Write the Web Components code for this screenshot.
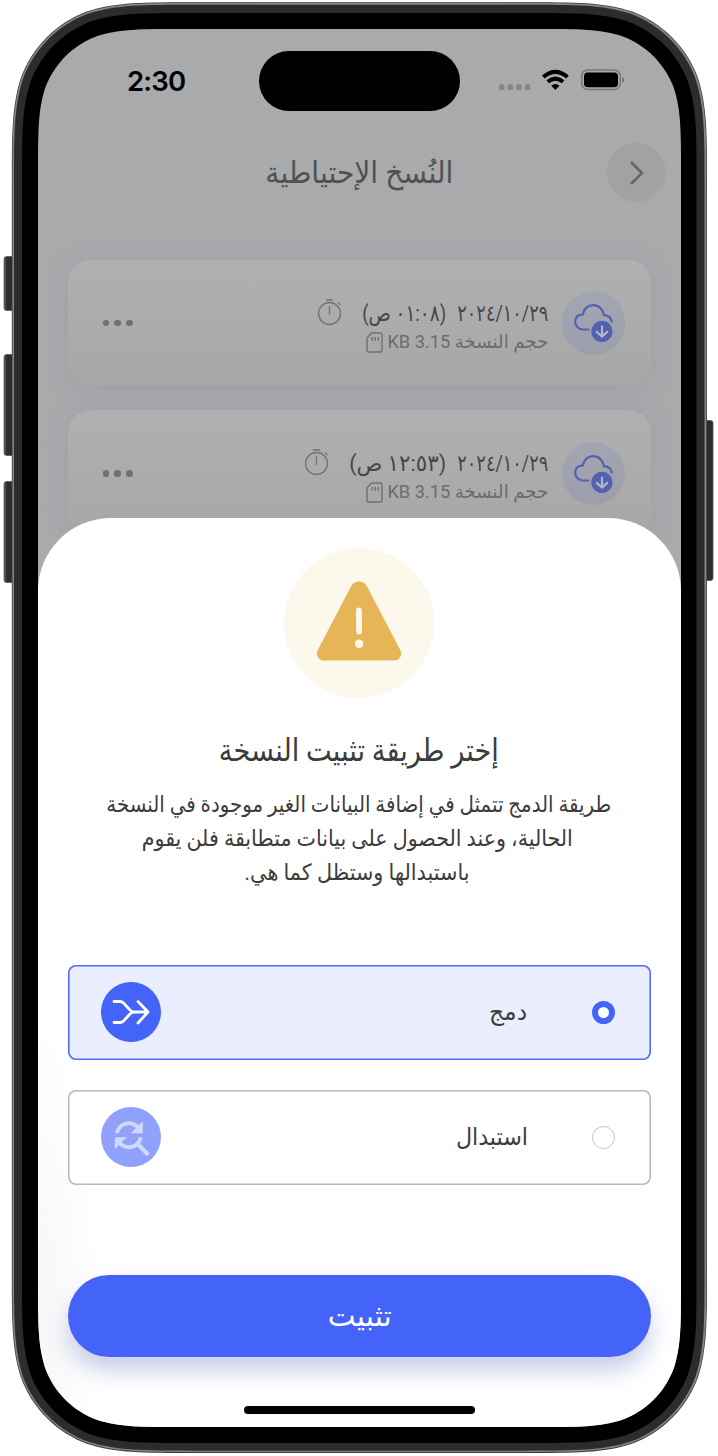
<!DOCTYPE html>
<html lang="ar">
<head>
<meta charset="utf-8">
<title>النُسخ الإحتياطية</title>
<style>
html,body{margin:0;background:#fff}
body{width:718px;height:1456px;overflow:hidden;font-family:Roboto,"DejaVu Sans",sans-serif}
</style>
</head>
<body>
<phone-frame>
  <status-bar></status-bar>
  <page-header></page-header>
  <backup-list>
    <backup-card date="٢٠٢٤/١٠/٢٩" time="(٠١:٠٨ ص)" time-width="84"></backup-card>
    <backup-card date="٢٠٢٤/١٠/٢٩" time="(١٢:٥٣ ص)" time-width="97"></backup-card>
  </backup-list>
  <install-sheet slot="sheet">
    <install-option label="دمج" label-width="38" kind="merge" selected></install-option>
    <install-option label="استبدال" label-width="72" kind="replace"></install-option>
  </install-sheet>
</phone-frame>
<script>
// Rounded rectangle with continuous-curvature corners
function squircle(x, y, w, h, r) {
  const A = 1.528665 * r, B = 1.088493 * r, C = .868407 * r, D = .631494 * r, E = .074911 * r, F = .372824 * r, G = .16906 * r;
  const X = x + w, Y = y + h;
  return `M${x + A} ${y}H${X - A}C${X - B} ${y} ${X - C} ${y} ${X - D} ${y + E}C${X - F} ${y + G} ${X - G} ${y + F} ${X - E} ${y + D}C${X} ${y + C} ${X} ${y + B} ${X} ${y + A}` +
    `V${Y - A}C${X} ${Y - B} ${X} ${Y - C} ${X - E} ${Y - D}C${X - G} ${Y - F} ${X - F} ${Y - G} ${X - D} ${Y - E}C${X - C} ${Y} ${X - B} ${Y} ${X - A} ${Y}` +
    `H${x + A}C${x + B} ${Y} ${x + C} ${Y} ${x + D} ${Y - E}C${x + F} ${Y - G} ${x + G} ${Y - F} ${x + E} ${Y - D}C${x} ${Y - C} ${x} ${Y - B} ${x} ${Y - A}` +
    `V${y + A}C${x} ${y + B} ${x} ${y + C} ${x + E} ${y + D}C${x + G} ${y + F} ${x + F} ${y + G} ${x + D} ${y + E}C${x + C} ${y} ${x + B} ${y} ${x + A} ${y}Z`;
}
class Base extends HTMLElement {
  connectedCallback() {
    if (this.shadowRoot) return;
    this.attachShadow({ mode: 'open' }).innerHTML = this.view();
    this.ready && this.ready();
  }
}

// One line of text condensed or widened to a set width
customElements.define('fit-text', class extends Base {
  view() {
    return `<style>:host{display:block;flex:none;direction:rtl;white-space:nowrap;line-height:1}
      span{display:inline-block;transform-origin:100% 50%;line-height:inherit}</style><span>${this.getAttribute('text')}</span>`;
  }
  ready() {
    const w = +this.getAttribute('w'), s = this.shadowRoot.querySelector('span');
    this.style.width = w + 'px';
    const n = s.getBoundingClientRect().width;
    if (n) s.style.transform = `scaleX(${w / n})`;
  }
});

customElements.define('phone-frame', class extends Base {
  view() {
    return `<style>
      :host{display:block;box-sizing:border-box;position:relative;width:718px;height:1456px;padding:29px 37px 29px 38px}
      .frame{position:absolute;inset:0}
      .screen{position:relative;display:flex;flex-direction:column;width:643px;height:1398px;background:#a9aaac;clip-path:path("${squircle(0, 0, 643, 1398, 94)}")}
    </style>
    <svg class="frame" width="718" height="1456">
      <defs><linearGradient id="k" x1="0" x2="1"><stop offset="0" stop-color="#666"/><stop offset=".25" stop-color="#2c2c2c"/><stop offset="1" stop-color="#2c2c2c"/></linearGradient></defs>
      <g fill="url(#k)" stroke="#454545" stroke-width=".6">
        <rect x="4" y="256.500" width="12" height="54" rx="2.500"/><rect x="4" y="354.500" width="12" height="101" rx="2.500"/>
        <rect x="4" y="481.500" width="12" height="101" rx="2.500"/></g>
      <rect x="701" y="420.500" width="12" height="160" rx="2.500" fill="#2c2c2c" stroke="#555" stroke-width=".8"/>
      <path d="${squircle(11.8, 2.3, 695.2, 1450.7, 120)}" fill="#3a3a3a"/>
      <path d="${squircle(12.5, 3, 693.8, 1449, 119)}" fill="#858585"/>
      <path d="${squircle(14, 4.7, 690.5, 1446, 118)}" fill="#2c2c2c"/>
      <path d="${squircle(22, 13, 674.5, 1430, 110)}" fill="#000"/>
    </svg>
    <div class="screen"><slot></slot><slot name="sheet"></slot></div>`;
  }
});

customElements.define('status-bar', class extends Base {
  view() {
    return `<style>
      :host{display:grid;grid-template-columns:221px 201px 221px;height:105px;flex:none;align-items:start}
      .time{font:600 27.500px/32px Inter,sans-serif;letter-spacing:-.8px;color:#000;padding:36px 0 0 89px}
      .island{height:60px;margin-top:22px;border-radius:30px;background:#000}
      svg{margin:36px 0 0 36px}
    </style>
    <div class="time">2:30</div><div class="island"></div>
    <svg width="132" height="30" viewBox="496 65 132 30">
      <g fill="#858587"><rect x="499" y="84.300" width="5.500" height="5.600" rx="1.500"/><rect x="507.600" y="84.300" width="5.500" height="5.600" rx="1.500"/><rect x="516.200" y="84.300" width="5.500" height="5.600" rx="1.500"/><rect x="524.800" y="84.300" width="5.500" height="5.600" rx="1.500"/></g>
      <g fill="none" stroke="#000" stroke-width="4"><path d="M543.300 77Q555.400 66.700 567.500 77"/><path d="M547.700 81.800Q555.400 75.500 563.100 81.800"/></g>
      <path d="M551.300 85.700Q555.400 82.100 559.500 85.700L555.400 90Z"/>
      <rect x="581.700" y="70" width="38.600" height="19.500" rx="6" fill="none" stroke="#777779" stroke-width="1.500"/>
      <rect x="584" y="72.500" width="34" height="14.700" rx="3.800"/><path d="M622 77.200q2.400.5 2.400 2.700t-2.400 2.700Z" fill="#777779"/>
    </svg>`;
  }
});

customElements.define('page-header', class extends Base {
  view() {
    return `<style>
      :host{display:grid;grid-template-columns:227px 188px 1fr;height:126px;flex:none;align-items:start}
      fit-text{grid-column:2;color:#505153;font-size:30px;line-height:40px;margin-top:19px}
      .back{justify-self:end;width:59px;height:59px;margin:9px 15.500px 0 0;border-radius:50%;background:#a2a2a4}
    </style>
    <fit-text text="النُسخ الإحتياطية" w="188"></fit-text>
    <svg class="back" viewBox="0 0 59 59" fill="none" stroke="#656567" stroke-width="2.500"><path d="M24 19L35 30L24 41"/></svg>`;
  }
});

customElements.define('backup-list', class extends Base {
  view() {
    return `<style>:host{display:flex;flex-direction:column;gap:24.400px;padding:0 30px}</style><slot></slot>`;
  }
});

customElements.define('backup-card', class extends Base {
  view() {
    return `<style>
      :host{display:flex;direction:rtl;align-items:center;box-sizing:border-box;height:126px;padding:0 26px 0 34.500px;border-radius:23px;background:linear-gradient(#b0b0b0,#a7a7a7);box-shadow:0 3px 24px rgba(135,142,158,.36);flex:none}
      .cloud{flex:none;width:63.500px;height:63.500px;border-radius:50%;background:linear-gradient(#a3a5b0,#9c9eac)}
      .info{margin:7px 13.500px 0 0;flex:1}
      .row{display:flex;align-items:center;height:32px}
      .date{color:#464646;font-size:22.500px;line-height:30px}
      .time{color:#464646;font-size:22.500px;line-height:30px;margin-right:11px}
      .watch{margin:0 20px 3px 0}
      .size{height:27px;gap:4px}
      .size fit-text{font-size:18.500px;line-height:25px;color:#6c6c6c}
      .more{display:flex;gap:5.600px}
      .more i{width:6.400px;height:6.400px;border-radius:50%;background:#707070}
    </style>
    <svg class="cloud" viewBox="0 0 64 64" fill="none" stroke="#5361b0" stroke-width="2.200" stroke-linecap="round">
      <path d="M26.700 38.800H20.700A7.900 7.900 0 0 1 13.200 31C13.200 26.500 16.500 23.500 20.900 23.700C22.300 17.800 26 14.200 31.600 14.200S41.200 18.600 42.200 24.300C46.500 24.500 49.500 26.900 50.200 30.900"/>
      <circle cx="40.300" cy="40.700" r="10.700" fill="#5361b0" stroke="none"/>
      <path d="M40.300 35.800V45.400M35 41.200L40.300 46L45.600 41.200" stroke="#b3b6c7"/></svg>
    <div class="info">
      <div class="row"><fit-text class="date" text="${this.getAttribute('date')}" w="91"></fit-text>
        <fit-text class="time" text="${this.getAttribute('time')}" w="${this.getAttribute('time-width')}"></fit-text>
        <svg class="watch" width="25" height="28" viewBox="0 0 25 28" fill="none" stroke="#737373" stroke-width="1.300"><circle cx="12.500" cy="15.500" r="11"/><path d="M12.500 8V17M9 2H16M21 4.500L23.500 7"/></svg></div>
      <div class="row size"><fit-text text="حجم النسخة 3.15 KB" w="161"></fit-text>
        <svg width="17" height="21" viewBox="0 0 17 21" fill="none" stroke="#707070" stroke-width="1.400"><path d="M5.500 1H14.500Q16 1 16 2.500V18.500Q16 20 14.500 20H2.500Q1 20 1 18.500V6Z"/><path d="M6.300 5V8.700M9.300 5V8.700M12.300 5V8.700"/></svg></div>
    </div>
    <div class="more"><i></i><i></i><i></i></div>`;
  }
});

customElements.define('install-sheet', class extends Base {
  view() {
    return `<style>
      :host{position:absolute;left:0;right:0;bottom:0;height:909px;box-sizing:border-box;padding:30px 30px 0;border-radius:73px 73px 0 0;background:radial-gradient(60px 300px at 0 800px,#f6f6f6,#fff);display:flex;flex-direction:column;align-items:center;color:#3c3c3c}
      .warn{flex:none;width:150px;height:150px;border-radius:50%;background:#fdf8ec;margin-right:.5px}
      .title{font-size:31px;line-height:44px;height:44px;margin:31px 1px 0 0}
      .copy{display:flex;flex-direction:column;align-items:center;margin:14px 1px 76px 0}
      .copy fit-text{font-size:22.500px;line-height:34px;height:34px}
      .copy fit-text:nth-child(2){margin-right:4px}
      .copy fit-text:nth-child(3){margin-right:3px}
      .options{display:flex;flex-direction:column;gap:30.500px;align-self:stretch}
      .go{flex:none;align-self:stretch;display:flex;justify-content:center;align-items:center;height:81.500px;margin-top:90.500px;border-radius:41px;background:#4463f8;color:#fff;box-shadow:0 14px 22px rgba(70,85,180,.29)}
      .go fit-text{font-size:29px;line-height:40px}
      .home{flex:none;width:231px;height:8px;border-radius:4px;background:#000;margin-top:49px}
    </style>
    <svg class="warn" viewBox="0 0 150 150"><path d="M67.500 37.500Q70 33.600 75 33.600T82.500 37.500L116 101.500C119 107 115.500 112.600 110 112.600H40C34.500 112.600 31 107 34 101.500Z" fill="#e5b557"/><path d="M75 62.500V83.500" stroke="#fdf8ec" stroke-width="5.800" stroke-linecap="round"/><circle cx="75" cy="95.700" r="4.300" fill="#fdf8ec"/></svg>
    <fit-text class="title" text="إختر طريقة تثبيت النسخة" w="280"></fit-text>
    <div class="copy">
      <fit-text text="طريقة الدمج تتمثل في إضافة البيانات الغير موجودة في النسخة" w="505"></fit-text>
      <fit-text text="الحالية، وعند الحصول على بيانات متطابقة فلن يقوم" w="431"></fit-text>
      <fit-text text="باستبدالها وستظل كما هي." w="225"></fit-text>
    </div>
    <div class="options"><slot></slot></div>
    <div class="go"><fit-text text="تثبيت" w="64"></fit-text></div>
    <div class="home"></div>`;
  }
});

customElements.define('install-option', class extends Base {
  view() {
    const on = this.hasAttribute('selected');
    const art = this.getAttribute('kind') === 'merge'
      ? `<g fill="none" stroke="#fff" stroke-width="2.800" stroke-linecap="round" stroke-linejoin="round"><path d="M13 19.500H19Q21 19.500 22.500 21L28.500 27.500Q30.500 30 33 30H47M13 40.500H19Q21 40.500 22.500 39L28.500 32.500Q30.500 30 33 30M37 19.500L47 30L37 41"/></g>`
      : `<path transform="translate(5.800 6.200) scale(2)" fill="#d0d8fd" d="M11 6c1.380 0 2.630.56 3.540 1.460L12 10h6V4l-2.050 2.050C14.680 4.780 12.930 4 11 4c-3.530 0-6.430 2.610-6.920 6H6.100c.46-2.280 2.480-4 4.900-4zm5.640 9.140c.66-.9 1.120-1.970 1.280-3.140H15.900c-.46 2.280-2.480 4-4.900 4-1.380 0-2.630-.56-3.540-1.460L10 12H4v6l2.050-2.050C7.320 17.220 9.070 18 11 18c1.550 0 2.980-.51 4.140-1.360L20 21.490 21.490 20l-4.850-4.860z"/>`;
    return `<style>
      :host{display:flex;direction:rtl;align-items:center;box-sizing:border-box;height:94.600px;padding:0 36.500px 0 33.400px;border-radius:8px;box-shadow:inset 0 0 0 1.600px ${on ? '#4f6df8' : '#bababa'};background:${on ? '#ebeefe' : '#fff'}}
      .radio{box-sizing:border-box;width:23px;height:23px;border-radius:50%;background:#fff;border:${on ? '6.500px solid #4463f8' : '1px solid #c4c4c4'}}
      fit-text{margin-right:64px;font-size:24px;line-height:32px}
      .art{flex:none;width:60px;height:60px;border-radius:50%;background:${on ? '#4463f8' : '#8fa1fb'};margin-right:auto}
    </style>
    <span class="radio"></span><fit-text text="${this.getAttribute('label')}" w="${this.getAttribute('label-width')}"></fit-text>
    <svg class="art" viewBox="0 0 60 60">${art}</svg>`;
  }
});
</script>
</body>
</html>
